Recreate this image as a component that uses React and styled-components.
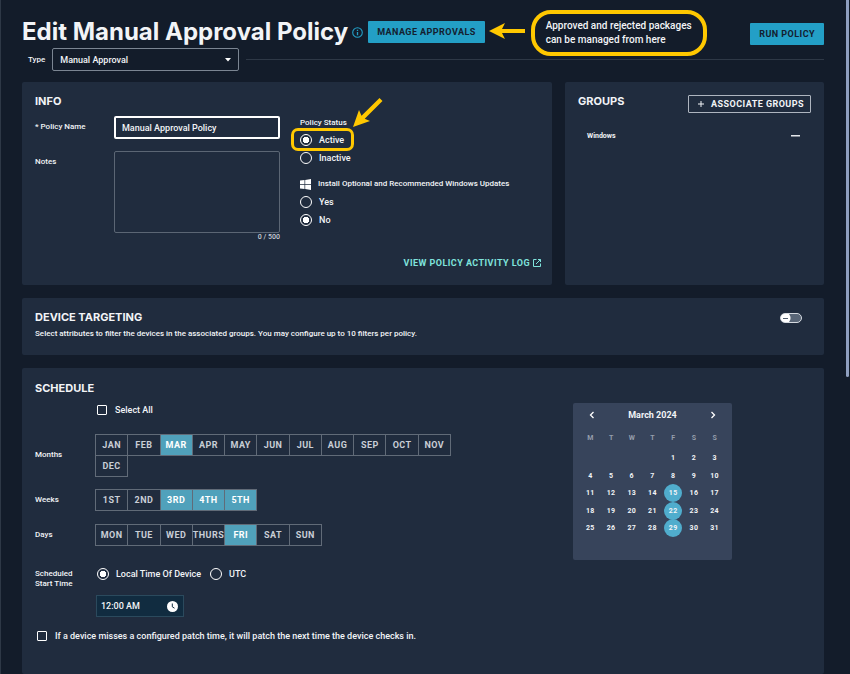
import React, { useState } from 'react';
import styled, { createGlobalStyle } from 'styled-components';

const color = {
  page: '#131c2a',
  panel: '#202c3e',
  text: '#f2f4f7',
  muted: '#c9ced6',
  line: '#2e3846',
  border: '#5b6674',
  accent: '#239fc6',
  selected: '#50a1bb',
  note: '#ffc800',
  link: '#7fe3dc',
};

const GlobalStyle = createGlobalStyle`
  * { box-sizing: border-box; }
  html { background: ${color.page}; }
  body {
    margin: 0;
    color: ${color.text};
    font: 500 9px/12px Roboto, sans-serif;
  }
  button, input, select, textarea { font: inherit; color: inherit; margin: 0; }
  button { cursor: pointer; }
  svg { display: block; }
`;

const Page = styled.div`
  display: flex;
  flex-direction: column;
  height: 100vh;
  overflow: hidden;
  padding: 21px 26px 0 21px;
  border-left: 1px solid ${color.line};
`;

const ScrollThumb = styled.div`
  position: fixed;
  top: 0;
  right: 1px;
  width: 3px;
  height: 56vh;
  border-radius: 0 0 2px 2px;
  background: #8f9fbf;
`;

const Header = styled.header`
  display: flex;
  align-items: center;
  height: 22px;
`;

const Title = styled.h1`
  margin: 0 4px 0 0;
  font: 700 24px/22px Inter, sans-serif;
  white-space: nowrap;
`;

const InfoButton = styled.button`
  flex: none;
  margin-right: 5px;
  padding: 0;
  border: 0;
  background: none;
  color: ${color.accent};
`;

const ManageArea = styled.div`
  position: relative;
  flex: none;
`;

const SolidButton = styled.button`
  flex: none;
  height: 22px;
  padding: 0 9px;
  border: 0;
  border-radius: 1px;
  background: ${color.accent};
  color: #14202f;
  font: 700 9px/22px Roboto, sans-serif;
  letter-spacing: 0.05em;
  white-space: nowrap;
`;

const RunButton = styled(SolidButton)`
  margin: 4px 0 0 auto;
`;

const NoteArrow = styled.svg`
  position: absolute;
  top: 1px;
  left: calc(100% + 4px);
`;

const Callout = styled.p`
  position: absolute;
  top: -11px;
  left: calc(100% + 46px);
  margin: 0;
  padding: 5px 11px;
  border: 4px solid ${color.note};
  border-radius: 20px;
  font-size: 10px;
  line-height: 14px;
  white-space: nowrap;
`;

const TypeRow = styled.div`
  display: flex;
  align-items: center;
  margin: 5px 0 11px 6px;
  font-size: 8px;
`;

const SelectBox = styled.div`
  display: flex;
  align-items: center;
  width: 187px;
  height: 23px;
  margin: 0 7px 0 7px;
  border: 1px solid #7b8592;
  border-radius: 2px;
  svg { margin: 0 7px 0 -15px; pointer-events: none; }
`;

const TypeSelect = styled.select`
  flex: 1;
  height: 21px;
  padding: 0 16px 0 7px;
  border: 0;
  appearance: none;
  background: transparent;
  font-size: 9px;
`;

const Rule = styled.hr`
  flex: 1;
  margin: 0;
  border: 0;
  border-top: 1px solid ${color.line};
`;

const TopGrid = styled.div`
  display: grid;
  grid-template-columns: 530fr 259fr;
  gap: 13px;
  margin-bottom: 13px;
`;

const Panel = styled.section`
  display: flex;
  flex-direction: column;
  padding: 11px 13px 12px;
  border-radius: 2px;
  background: ${color.panel};
`;

const InfoPanel = styled(Panel)`
  min-height: 203px;
`;

const TargetPanel = styled(Panel)`
  flex: none;
  flex-direction: row;
  justify-content: space-between;
  min-height: 57px;
  margin-bottom: 13px;
  padding-right: 22px;
`;

const SchedulePanel = styled(Panel)`
  flex: 1 0 auto;
  padding-top: 12px;
`;

const PanelTitle = styled.h2`
  margin: 0;
  font: 700 11px/16px Inter, sans-serif;
  white-space: nowrap;
`;

const InfoBody = styled.div`
  display: grid;
  grid-template-columns: 245px 1fr;
  gap: 20px;
  margin-top: 7px;
`;

const Field = styled.div`
  display: grid;
  grid-template-columns: 79px minmax(0, 1fr);
  margin-bottom: ${(p) => (p.$last ? 0 : 12)}px;
`;

const FieldLabel = styled.label`
  font-size: 8px;
  line-height: 10px;
  padding-top: 6px;
`;

const TextInput = styled.input`
  width: 100%;
  height: 23px;
  padding: 0 6px;
  border: 2px solid #fff;
  border-radius: 2px;
  background: none;
  outline: none;
`;

const NotesArea = styled.textarea`
  display: block;
  width: 100%;
  height: 82px;
  padding: 6px 8px;
  border: 1px solid ${color.border};
  border-radius: 2px;
  background: none;
  resize: none;
`;

const Counter = styled.div`
  text-align: right;
  font-size: 7px;
  line-height: 9px;
  color: ${color.muted};
`;

const StatusColumn = styled.div`
  padding-top: 1px;
`;

const RadioGroup = styled.fieldset`
  min-width: 0;
  margin: 0 0 11px;
  padding: 0;
  border: 0;
`;

const Legend = styled.legend`
  display: flex;
  align-items: center;
  gap: 7px;
  padding: 0;
  margin-bottom: ${(p) => (p.$spaced ? 3 : 2)}px;
  font-size: 8px;
  line-height: 12px;
  white-space: nowrap;
`;

const Option = styled.label`
  position: relative;
  display: flex;
  align-items: center;
  gap: 7px;
  height: ${(p) => (p.$compact ? 12 : 18)}px;
  width: max-content;
  font-size: 9px;
`;

const Radio = styled.input`
  width: 12px;
  height: 12px;
  border: 1px solid #fff;
  border-radius: 50%;
  appearance: none;
  background: ${(p) => (p.checked ? 'radial-gradient(circle, #fff 0 3px, transparent 3px)' : 'none')};
`;

const CheckBox = styled.input`
  width: 10px;
  height: 10px;
  margin: 0 1px 0 2px;
  border: 1px solid #fff;
  border-radius: 1px;
  appearance: none;
  &:checked { background: ${color.selected}; }
`;

const Highlight = styled.span`
  position: absolute;
  inset: -3px -10px -2px -9px;
  border: 3px solid ${color.note};
  border-radius: 7px;
  pointer-events: none;
`;

const StatusArrow = styled.svg`
  position: absolute;
  left: 53px;
  bottom: 22px;
`;

const LogLink = styled.a`
  display: flex;
  align-items: center;
  gap: 3px;
  align-self: flex-end;
  margin: auto -2px 4px 0;
  color: ${color.link};
  font-weight: 700;
  letter-spacing: 0.05em;
  text-decoration: none;
  white-space: nowrap;
`;

const GroupsHead = styled.div`
  display: flex;
  align-items: flex-start;
  justify-content: space-between;
`;

const OutlineButton = styled.button`
  display: flex;
  align-items: center;
  gap: 6px;
  height: 18px;
  margin-top: 2px;
  padding: 0 6px 0 8px;
  border: 1px solid #aeb5bf;
  border-radius: 1px;
  background: none;
  font-weight: 700;
  letter-spacing: 0.05em;
  white-space: nowrap;
`;

const GroupItem = styled.div`
  display: flex;
  align-items: center;
  justify-content: space-between;
  margin: 17px 11px 0 9px;
  font-size: 7px;
  font-weight: 700;
`;

const RemoveButton = styled.button`
  padding: 5px 0;
  border: 0;
  background: none;
`;

const Description = styled.p`
  margin: 3px 0 0;
  font-size: 8px;
  line-height: 12px;
`;

const Switch = styled.input`
  width: 22px;
  height: 10px;
  margin-top: 4px;
  border: 1px solid #d5dae0;
  border-radius: 5px;
  appearance: none;
  background:
    linear-gradient(#4e5a6b, #4e5a6b) 2px 50% / 5px 1px no-repeat,
    radial-gradient(circle at 4px 50%, #fff 0 5px, transparent 6px),
    #596677;
`;

const ScheduleBody = styled.div`
  display: grid;
  grid-template-columns: minmax(0, 1fr) 159px;
  gap: 20px;
  padding: 7px 79px 0 0;
`;

const ScheduleForm = styled.div`
  padding-top: 1px;
`;

const IndentedRow = styled.div`
  margin: 0 0 18px 60px;
`;

const ScheduleRow = styled.div`
  display: grid;
  grid-template-columns: 60px minmax(0, 356px);
  align-items: center;
  margin-bottom: ${(p) => p.$gap || 12}px;
`;

const RowLabel = styled.span`
  font-size: 8px;
  line-height: 10px;
  padding-bottom: 2px;
`;

const ToggleGrid = styled.div`
  display: grid;
  grid-template-columns: repeat(11, minmax(0, 1fr));
  padding: 0 1px 1px 0;
`;

const ToggleButton = styled.button`
  display: flex;
  align-items: center;
  justify-content: center;
  height: 22px;
  margin: 0 -1px ${(p) => (p.$tight ? -1 : 0)}px 0;
  padding: 0;
  border: 1px solid #616b78;
  background: ${(p) => (p.$on ? color.selected : 'transparent')};
  color: ${(p) => (p.$on ? '#fff' : color.muted)};
  font-weight: 700;
  letter-spacing: 0.05em;
`;

const StartRow = styled(ScheduleRow)`
  align-items: start;
`;

const StartLabel = styled(RowLabel)`
  padding: 1px 0 0;
`;

const TimeOptions = styled.div`
  display: flex;
  gap: 9px;
  padding-left: 2px;
`;

const TimeBox = styled.div`
  display: flex;
  align-items: center;
  width: 88px;
  height: 22px;
  margin: 0 0 13px 61px;
  padding: 0 5px 0 4px;
  border: 1px solid #2b4a5d;
  background: #112c40;
`;

const TimeInput = styled.input`
  flex: 1;
  min-width: 0;
  padding: 0;
  border: 0;
  background: none;
  outline: none;
`;

const IconButton = styled.button`
  padding: 0;
  border: 0;
  background: none;
`;

const Calendar = styled.div`
  align-self: start;
  min-height: 157px;
  padding: 6px 7px;
  border-radius: 2px;
  background: #37445b;
`;

const CalendarHead = styled.div`
  display: flex;
  align-items: center;
  justify-content: space-between;
  margin-bottom: 11px;
  padding: 0 6px;
  font-size: 9px;
  font-weight: 700;
`;

const DayGrid = styled.div`
  display: grid;
  grid-template-columns: repeat(7, 1fr);
  justify-items: center;
`;

const WeekDay = styled.span`
  height: 17px;
  color: #959eac;
  font-size: 7px;
  font-weight: 700;
`;

const DaySlot = styled.div`
  display: flex;
  align-items: center;
  height: ${(p) => (p.$short ? 17 : 18)}px;
`;

const Day = styled.button`
  width: 18px;
  height: 18px;
  padding: 0;
  border: 0;
  border-radius: 50%;
  background: ${(p) => (p.$on ? '#50adcd' : 'none')};
  font: 700 7px/18px Roboto, sans-serif;
  letter-spacing: 0.05em;
`;

const MONTHS = ['JAN', 'FEB', 'MAR', 'APR', 'MAY', 'JUN', 'JUL', 'AUG', 'SEP', 'OCT', 'NOV', 'DEC'];
const WEEKS = ['1ST', '2ND', '3RD', '4TH', '5TH'];
const DAYS = ['MON', 'TUE', 'WED', 'THURS', 'FRI', 'SAT', 'SUN'];
const CALENDAR_DAYS = ['M', 'T', 'W', 'T', 'F', 'S', 'S'];
const PATCH_DAYS = [15, 22, 29];

function ToggleSet({ label, items, initial, gap }) {
  const [on, setOn] = useState(initial);
  const flip = (item) =>
    setOn(on.includes(item) ? on.filter((x) => x !== item) : [...on, item]);
  return (
    <ScheduleRow $gap={gap} role="group" aria-label={label}>
      <RowLabel>{label}</RowLabel>
      <ToggleGrid>
        {items.map((item) => (
          <ToggleButton
            key={item}
            type="button"
            $on={on.includes(item)}
            $tight={items.length > 11}
            aria-pressed={on.includes(item)}
            onClick={() => flip(item)}
          >
            {item}
          </ToggleButton>
        ))}
      </ToggleGrid>
    </ScheduleRow>
  );
}

function RadioOption({ name, value, current, onPick, compact, children }) {
  return (
    <Option $compact={compact}>
      <Radio type="radio" name={name} checked={current === value} onChange={() => onPick(value)} />
      {value}
      {children}
    </Option>
  );
}

function PatchCalendar() {
  return (
    <Calendar>
      <CalendarHead>
        <IconButton type="button" aria-label="Previous month">
          <svg width="12" height="12" viewBox="0 0 12 12" fill="none" stroke="#fff" strokeWidth="1.3">
            <path d="M7.5 3 4.5 6l3 3" />
          </svg>
        </IconButton>
        March 2024
        <IconButton type="button" aria-label="Next month">
          <svg width="12" height="12" viewBox="0 0 12 12" fill="none" stroke="#fff" strokeWidth="1.3">
            <path d="m4.500 3 3 3-3 3" />
          </svg>
        </IconButton>
      </CalendarHead>
      <DayGrid>
        {CALENDAR_DAYS.map((d, i) => (
          <WeekDay key={i}>{d}</WeekDay>
        ))}
        {Array.from({ length: 35 }, (_, i) => i - 3).map((n, i) => (
          <DaySlot key={i} $short={Math.floor(i / 7) % 2 === 1}>
            {n > 0 && (
              <Day type="button" $on={PATCH_DAYS.includes(n)}>
                {n}
              </Day>
            )}
          </DaySlot>
        ))}
      </DayGrid>
    </Calendar>
  );
}

export default function App() {
  const [name, setName] = useState('Manual Approval Policy');
  const [notes, setNotes] = useState('');
  const [status, setStatus] = useState('Active');
  const [optional, setOptional] = useState('No');
  const [zone, setZone] = useState('Local Time Of Device');
  const [time, setTime] = useState('12:00 AM');

  return (
    <>
      <GlobalStyle />
      <Page>
        <Header>
          <Title>Edit Manual Approval Policy</Title>
          <InfoButton type="button" aria-label="About this policy">
            <svg width="11" height="11" viewBox="0 0 11 11" fill="none" stroke="currentColor">
              <circle cx="5.500" cy="5.500" r="4.800" strokeWidth="1.100" />
              <path d="M5.500 5v3.200M5.500 2.700v1.200" strokeWidth="1.300" />
            </svg>
          </InfoButton>
          <ManageArea>
            <SolidButton type="button">MANAGE APPROVALS</SolidButton>
            <NoteArrow width="36" height="18" viewBox="0 0 36 18" fill={color.note}>
              <path d="M0 9 16 1l-3 6h23v4H13l3 6z" />
            </NoteArrow>
            <Callout>
              Approved and rejected packages
              <br />
              can be managed from here
            </Callout>
          </ManageArea>
          <RunButton type="button">RUN POLICY</RunButton>
        </Header>

        <TypeRow>
          <label htmlFor="policy-type">Type</label>
          <SelectBox>
            <TypeSelect id="policy-type" defaultValue="manual">
              <option value="manual">Manual Approval</option>
            </TypeSelect>
            <svg width="6" height="4" viewBox="0 0 6 4" fill="#fff">
              <path d="M0 0h6L3 3.500z" />
            </svg>
          </SelectBox>
          <Rule />
        </TypeRow>

        <TopGrid>
          <InfoPanel>
            <PanelTitle>INFO</PanelTitle>
            <InfoBody>
              <div>
                <Field>
                  <FieldLabel htmlFor="policy-name">* Policy Name</FieldLabel>
                  <TextInput id="policy-name" value={name} onChange={(e) => setName(e.target.value)} />
                </Field>
                <Field $last>
                  <FieldLabel htmlFor="notes">Notes</FieldLabel>
                  <div>
                    <NotesArea
                      id="notes"
                      maxLength={500}
                      value={notes}
                      onChange={(e) => setNotes(e.target.value)}
                    />
                    <Counter>{notes.length} / 500</Counter>
                  </div>
                </Field>
              </div>
              <StatusColumn>
                <RadioGroup>
                  <Legend>Policy Status</Legend>
                  <RadioOption name="status" value="Active" current={status} onPick={setStatus}>
                    <Highlight />
                    <StatusArrow width="30" height="30" viewBox="0 0 30 30" fill={color.note}>
                      <path d="M0 30 6 13l2.500 5.700L26.500 1l3 3L11.700 21.700 17 24z" />
                    </StatusArrow>
                  </RadioOption>
                  <RadioOption name="status" value="Inactive" current={status} onPick={setStatus} />
                </RadioGroup>
                <RadioGroup>
                  <Legend $spaced>
                    <svg width="11" height="11" viewBox="0 0 11 11" fill="#fff">
                      <path d="M0 1.600 4.500 1v4.200H0zM5.200.9 11 0v5.200H5.200zM0 5.900h4.500V10L0 9.400zM5.200 5.900H11V11l-5.800-.9z" />
                    </svg>
                    Install Optional and Recommended Windows Updates
                  </Legend>
                  <RadioOption name="optional" value="Yes" current={optional} onPick={setOptional} />
                  <RadioOption name="optional" value="No" current={optional} onPick={setOptional} />
                </RadioGroup>
              </StatusColumn>
            </InfoBody>
            <LogLink href="#activity-log">
              VIEW POLICY ACTIVITY LOG
              <svg width="8" height="8" viewBox="0 0 8 8" fill="none" stroke="currentColor">
                <path d="M3.500.5h-3v7h7v-3M5 .5h2.500V3M7.500.5 3 5" />
              </svg>
            </LogLink>
          </InfoPanel>

          <Panel>
            <GroupsHead>
              <PanelTitle>GROUPS</PanelTitle>
              <OutlineButton type="button">
                <svg width="8" height="8" viewBox="0 0 8 8" stroke="currentColor">
                  <path d="M4 1v6M1 4h6" />
                </svg>
                ASSOCIATE GROUPS
              </OutlineButton>
            </GroupsHead>
            <GroupItem>
              Windows
              <RemoveButton type="button" aria-label="Remove Windows">
                <svg width="9" height="2" viewBox="0 0 9 2" fill="#e4e7eb">
                  <path d="M0 0h9v1.500H0z" />
                </svg>
              </RemoveButton>
            </GroupItem>
          </Panel>
        </TopGrid>

        <TargetPanel>
          <div>
            <PanelTitle>DEVICE TARGETING</PanelTitle>
            <Description>
              Select attributes to filter the devices in the associated groups. You may configure up to 10
              filters per policy.
            </Description>
          </div>
          <Switch type="checkbox" role="switch" aria-label="Device targeting" />
        </TargetPanel>

        <SchedulePanel>
          <PanelTitle>SCHEDULE</PanelTitle>
          <ScheduleBody>
            <ScheduleForm>
              <IndentedRow>
                <Option $compact>
                  <CheckBox type="checkbox" />
                  Select All
                </Option>
              </IndentedRow>
              <ToggleSet label="Months" items={MONTHS} initial={['MAR']} />
              <ToggleSet label="Weeks" items={WEEKS} initial={['3RD', '4TH', '5TH']} />
              <ToggleSet label="Days" items={DAYS} initial={['FRI']} gap={21} />
              <StartRow $gap={6}>
                <StartLabel>
                  Scheduled
                  <br />
                  Start Time
                </StartLabel>
                <TimeOptions>
                  <RadioOption compact name="zone" value="Local Time Of Device" current={zone} onPick={setZone} />
                  <RadioOption compact name="zone" value="UTC" current={zone} onPick={setZone} />
                </TimeOptions>
              </StartRow>
              <TimeBox>
                <TimeInput aria-label="Start time" value={time} onChange={(e) => setTime(e.target.value)} />
                <IconButton type="button" aria-label="Pick a time">
                  <svg width="11" height="11" viewBox="0 0 11 11">
                    <circle cx="5.500" cy="5.500" r="5.500" fill="#fff" />
                    <path d="M5.300 2.500v3.300l2.200 1.400" fill="none" stroke="#112c40" />
                  </svg>
                </IconButton>
              </TimeBox>
              <Option $compact>
                <CheckBox type="checkbox" />
                If a device misses a configured patch time, it will patch the next time the device checks in.
              </Option>
            </ScheduleForm>
            <PatchCalendar />
          </ScheduleBody>
        </SchedulePanel>
      </Page>
      <ScrollThumb />
    </>
  );
}
